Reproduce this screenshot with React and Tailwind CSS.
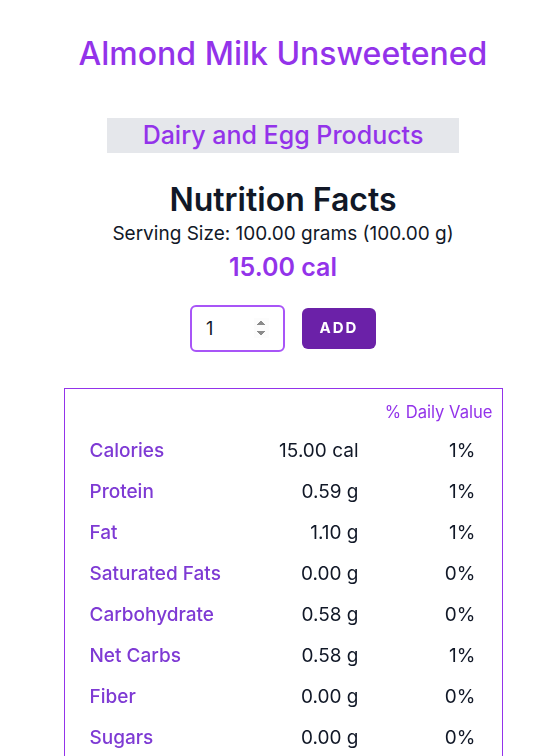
import React, { useState } from "react";

const nutrients = [
  { name: "Calories", amount: "15.00 cal", daily: "1%" },
  { name: "Protein", amount: "0.59 g", daily: "1%" },
  { name: "Fat", amount: "1.10 g", daily: "1%" },
  { name: "Saturated Fats", amount: "0.00 g", daily: "0%" },
  { name: "Carbohydrate", amount: "0.58 g", daily: "0%" },
  { name: "Net Carbs", amount: "0.58 g", daily: "1%" },
  { name: "Fiber", amount: "0.00 g", daily: "0%" },
  { name: "Sugars", amount: "0.00 g", daily: "0%" },
];

const App = () => {
  const [quantity, setQuantity] = useState(1);

  return (
    <div className="min-h-screen bg-white font-['Inter',sans-serif] pl-[10px]">
      <div className="flex flex-col items-center pt-[32px]">
        <h1 className="text-[32px] leading-[44px] font-medium text-[#9333ea]">
          Almond Milk Unsweetened
        </h1>

        <div className="mt-[42px] w-[352px] h-[35px] bg-[#e5e7eb] flex items-center justify-center">
          <h2 className="text-[25px] font-medium text-[#9333ea]">
            Dairy and Egg Products
          </h2>
        </div>

        <h2 className="mt-[27px] text-[32px] leading-[40px] font-semibold text-[#111827]">
          Nutrition Facts
        </h2>
        <p className="text-[19px] leading-[28px] text-[#111827]">
          Serving Size: 100.00 grams (100.00 g)
        </p>
        <p className="mt-[4px] text-[25px] leading-[30px] font-semibold text-[#9333ea]">
          15.00 cal
        </p>

        <div className="mt-[23px] flex items-center gap-[17px]">
          <input
            type="number"
            autoFocus
            value={quantity}
            onChange={(e) => setQuantity(e.target.value)}
            className="w-[95px] h-[47px] px-[14px] text-[18px] text-[#111827] border-2 border-[#a855f7] rounded-md outline-none"
          />
          <button
            type="button"
            className="w-[74px] h-[41px] bg-[#6b21a8] text-white text-[15px] font-bold tracking-[2px] rounded-md"
          >
            ADD
          </button>
        </div>

        <div className="mt-[36px] w-[439px] border border-[#9333ea] px-[25px] pt-[12px] pb-[30px]">
          <div className="flex justify-end -mr-[16px] text-[16.6px] leading-[22px] text-[#9333ea]">
            % Daily Value
          </div>
          <div className="mt-[8px]">
            {nutrients.map((item) => (
              <div
                key={item.name}
                className="flex items-center h-[41px] text-[19px]"
              >
                <span className="w-[160px] font-medium text-[#7e3ad4]">
                  {item.name}
                </span>
                <span className="w-[109px] text-right text-[#111827]">
                  {item.amount}
                </span>
                <span className="w-[117px] text-right text-[#111827]">
                  {item.daily}
                </span>
              </div>
            ))}
          </div>
        </div>
      </div>
    </div>
  );
};

export default App;
